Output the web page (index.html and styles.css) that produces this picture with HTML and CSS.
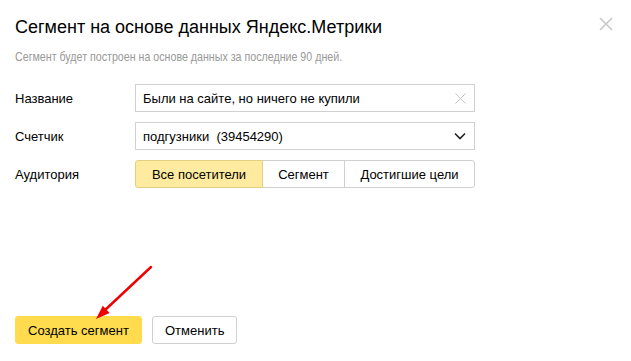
FILE: index.html
```html
<!DOCTYPE html>
<html lang="ru">
<head>
  <meta charset="UTF-8">
  <title>Сегмент</title>
  <link rel="stylesheet" href="styles.css">
</head>
<body>

<div class="modal">
  <!-- Шапка -->
  <div class="head">
    <h1>Сегмент на основе данных Яндекс.Метрики</h1>
    <span class="close">
      <svg width="14" height="14" viewBox="0 0 14 14"><path d="M1 1L13 13M13 1L1 13" stroke="#c8c8c8" stroke-width="1.6"/></svg>
    </span>
  </div>
  <p class="hint"><span>Сегмент будет построен на основе данных за последние 90 дней.</span></p>

  <!-- Форма -->
  <div class="form">
    <div class="row">
      <label>Название</label>
      <div class="field">
        <span class="value">Были на сайте, но ничего не купили</span>
        <svg width="11" height="11" viewBox="0 0 11 11"><path d="M0.5 0.5L10.5 10.5M10.5 0.5L0.5 10.5" stroke="#c4c4c4" stroke-width="1"/></svg>
      </div>
    </div>
    <div class="row">
      <label>Счетчик</label>
      <div class="field">
        <span class="value">подгузники&nbsp; (39454290)</span>
        <svg width="12" height="8" viewBox="0 0 12 8"><path d="M1 1.5L6 6.5L11 1.5" fill="none" stroke="#222" stroke-width="1.6"/></svg>
      </div>
    </div>
    <div class="row">
      <label>Аудитория</label>
      <div class="tabs">
        <span class="tab active">Все посетители</span>
        <span class="tab">Сегмент</span>
        <span class="tab">Достигшие цели</span>
      </div>
    </div>
  </div>

  <!-- Кнопки -->
  <div class="actions">
    <button class="btn primary">Создать сегмент</button>
    <button class="btn">Отменить</button>
  </div>

  <!-- Стрелка-указатель -->
  <svg class="arrow" width="70" height="66" viewBox="0 0 70 66">
    <path d="M64 4L17 48" stroke="#f00000" stroke-width="2.4" stroke-linecap="round"/>
    <path d="M9 56L15.8 42.8L22.6 50Z" fill="#f00000"/>
  </svg>
</div>

</body>
</html>
```

FILE: styles.css
```css
body {
  margin: 0;
  background: #fff;
  font-family: "Liberation Sans", Arial, sans-serif;
  color: #000;
}

.modal {
  position: relative;
  width: 631px;
  height: 361px;
  box-sizing: border-box;
  padding: 15px 15px 0 15px;
  display: flex;
  flex-direction: column;
}

.head {
  display: flex;
  justify-content: space-between;
  align-items: flex-start;
}

h1 {
  margin: 0;
  font-size: 18px;
  font-weight: normal;
  line-height: 24px;
}

.close {
  margin-top: 2px;
  margin-right: 3px;
  line-height: 0;
}

/* Подзаголовок узким начертанием */
.hint {
  margin: 10px 0 0 0;
  font-size: 13px;
  line-height: 16px;
  color: #999;
}

.hint span {
  display: inline-block;
  transform: scaleX(0.82);
  transform-origin: left center;
  white-space: nowrap;
}

/* Форма */
.form {
  margin-top: 19px;
  display: flex;
  flex-direction: column;
  gap: 10px;
}

.row {
  display: flex;
  align-items: center;
  height: 28px;
}

.row label {
  width: 120px;
  font-size: 13px;
}

.field {
  width: 340px;
  height: 28px;
  box-sizing: border-box;
  border: 1px solid #d0d0d0;
  display: flex;
  align-items: center;
  justify-content: space-between;
  padding: 0 8px 0 7px;
  font-size: 13px;
}

.tabs {
  display: flex;
  width: 340px;
  height: 28px;
}

.tab {
  box-sizing: border-box;
  height: 28px;
  border: 1px solid #d0d0d0;
  margin-left: -1px;
  display: flex;
  align-items: center;
  justify-content: center;
  font-size: 13px;
}

.tab:first-child {
  margin-left: 0;
  width: 128px;
  border-radius: 3px 0 0 3px;
}

.tab:nth-child(2) {
  width: 83px;
}

.tab:last-child {
  width: 131px;
  border-radius: 0 3px 3px 0;
}

.tab.active {
  background: #ffeba0;
  border-color: #e3cf7e;
  position: relative;
}

/* Кнопки */
.actions {
  margin-top: auto;
  margin-bottom: 17px;
  display: flex;
  gap: 10px;
}

.btn {
  height: 28px;
  padding: 0 12px;
  font-family: "Liberation Sans", Arial, sans-serif;
  font-size: 13px;
  color: #000;
  background: #fff;
  border: 1px solid #d0d0d0;
  border-radius: 3px;
}

.btn.primary {
  width: 127px;
  background: #ffdb4d;
  border-color: #ffdb4d;
}

.btn:last-child {
  width: 85px;
}

.arrow {
  position: absolute;
  left: 87px;
  top: 263px;
}
```
